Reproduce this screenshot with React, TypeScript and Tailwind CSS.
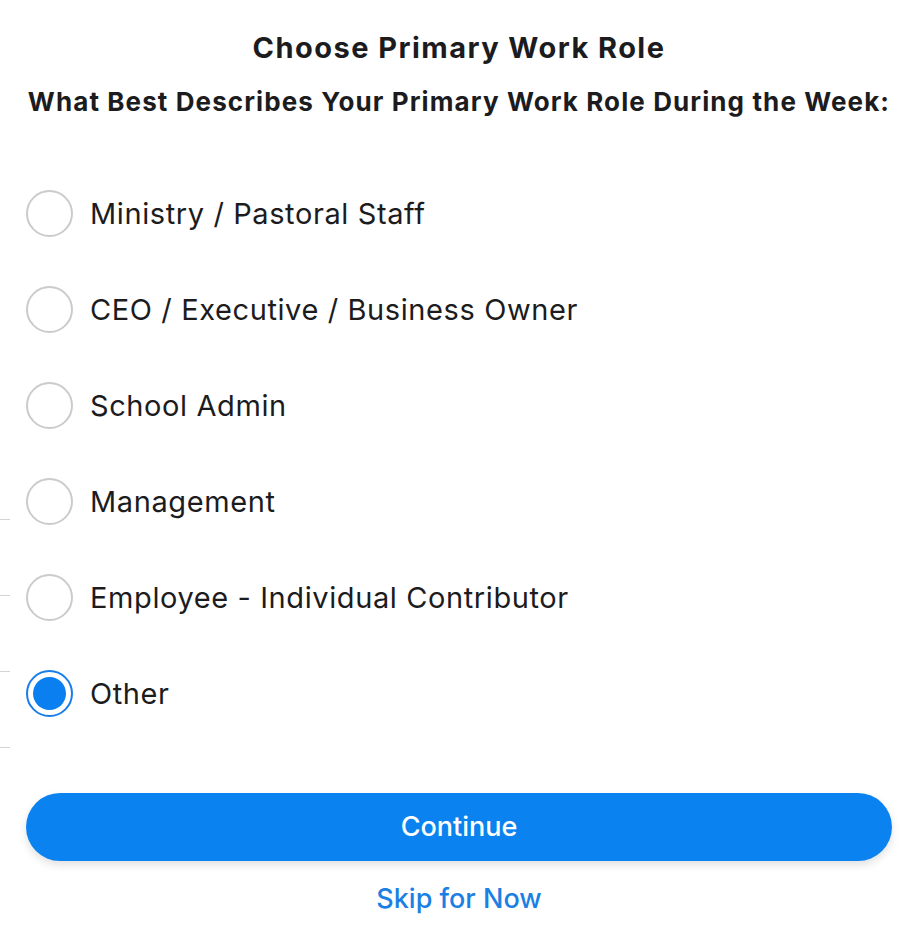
const roles = [
  "Ministry / Pastoral Staff",
  "CEO / Executive / Business Owner",
  "School Admin",
  "Management",
  "Employee - Individual Contributor",
  "Other",
];

const RadioDot = ({ checked }: { checked: boolean }) =>
  checked ? (
    <span className="w-[47px] h-[47px] rounded-full border-[2px] border-[#1a7ee8] flex items-center justify-center shrink-0">
      <span className="w-[33px] h-[33px] rounded-full bg-[#0a7ff0]"></span>
    </span>
  ) : (
    <span className="w-[47px] h-[47px] rounded-full border-[2px] border-[#cbcbcb] shrink-0"></span>
  );

const App = () => {
  const selected = "Other";
  return (
    <div
      className="relative w-[921px] h-[947px] bg-white text-[#1c1c1e] overflow-hidden"
      style={{ fontFamily: "Inter, 'Noto Sans', sans-serif" }}
    >
      {/* stray lines from the page behind the sheet */}
      <div className="absolute left-0 top-[519px] w-[10px] h-px bg-[#d4d4d4]"></div>
      <div className="absolute left-0 top-[595px] w-[10px] h-px bg-[#d4d4d4]"></div>
      <div className="absolute left-0 top-[671px] w-[10px] h-px bg-[#d4d4d4]"></div>
      <div className="absolute left-0 top-[747px] w-[10px] h-px bg-[#d4d4d4]"></div>

      <div className="flex flex-col pl-[26px] pr-[29px] pt-[30px]">
        <h1 className="text-center text-[29px] leading-[36px] font-bold tracking-[1.45px]">
          Choose Primary Work Role
        </h1>
        <h2 className="text-center text-[26px] leading-[36px] font-bold tracking-[1.1px] mt-[18px] whitespace-nowrap">
          What Best Describes Your Primary Work Role During the Week:
        </h2>

        <div className="flex flex-col mt-[45px]">
          {roles.map((role) => (
            <label key={role} className="flex items-center h-[96px] gap-[17px]">
              <RadioDot checked={role === selected} />
              <span className="text-[29px] leading-none tracking-[0.6px]">{role}</span>
            </label>
          ))}
        </div>

        <button className="mt-[52px] h-[68px] w-full rounded-full bg-[#0a82f0] text-white text-[27px] font-medium shadow-[0_4px_8px_rgba(0,0,0,0.12)]">
          Continue
        </button>
        <button className="mt-[18px] text-[27px] text-[#1b7fe3] font-medium">
          Skip for Now
        </button>
      </div>
    </div>
  );
};

export default App;
